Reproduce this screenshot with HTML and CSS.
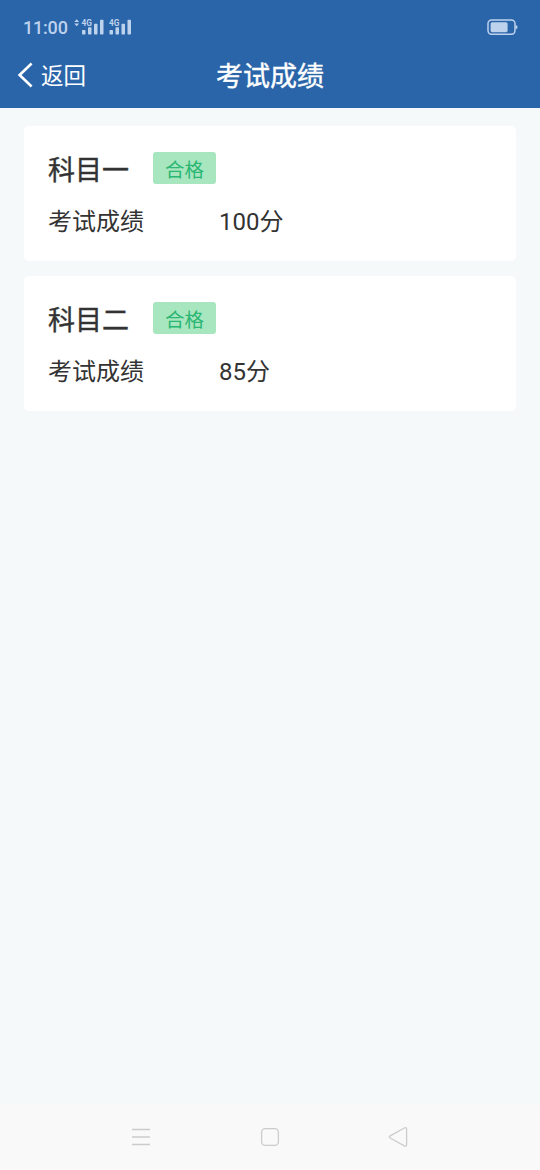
FILE: index.html
```
<!DOCTYPE html>
<html lang="zh-CN">
<head>
<meta charset="utf-8">
<title>考试成绩</title>
<link rel="stylesheet" href="styles.css">
</head>
<body>
<div class="screen">
  <header class="header">
    <div class="status">
      <span class="clock">11:00</span>
      <svg class="signal" width="60" height="20" viewBox="0 0 60 20">
        <path d="M0.3 7 2.7 4.2 5.1 7zM0.3 8.4 2.7 11.2 5.1 8.4z"/>
        <text x="7.6" y="10.7" textLength="10.4" lengthAdjust="spacingAndGlyphs">4G</text>
        <rect x="8" y="15" width="3.5" height="4.6" rx=".8"/>
        <rect x="14" y="12.2" width="3.5" height="7.4" rx=".8"/>
        <rect x="20" y="8.8" width="3.5" height="10.8" rx=".8"/>
        <rect x="26" y="4.8" width="3.5" height="14.8" rx=".8"/>
        <text x="34.9" y="10.7" textLength="10.4" lengthAdjust="spacingAndGlyphs">4G</text>
        <rect x="35.5" y="15" width="3.5" height="4.6" rx=".8"/>
        <rect x="41.5" y="12.2" width="3.5" height="7.4" rx=".8"/>
        <rect x="47.5" y="8.8" width="3.5" height="10.8" rx=".8"/>
        <rect x="53.5" y="4.8" width="3.5" height="14.8" rx=".8"/>
      </svg>
      <svg class="battery" width="31" height="17" viewBox="0 0 31 17">
        <rect class="battery-case" x="1" y="1" width="27" height="14.2" rx="3.6"/>
        <rect x="3.6" y="3.2" width="17" height="10" rx="1.6"/>
        <path d="M28.6 6q2 .4 2 2.1t-2 2.1z"/>
      </svg>
    </div>
    <nav class="navbar">
      <a class="back">
        <svg class="chevron" width="16" height="26" viewBox="0 0 16 26"><path d="M14.6 1.5 2.6 13 14.6 24.5"/></svg>
        <span>返回</span>
      </a>
      <h1 class="title">考试成绩</h1>
    </nav>
  </header>
  <main class="list">
    <section class="card">
      <div class="card-head"><h2 class="subject">科目一</h2><span class="tag">合格</span></div>
      <div class="row"><span class="label">考试成绩</span><span class="score">100分</span></div>
    </section>
    <section class="card">
      <div class="card-head"><h2 class="subject">科目二</h2><span class="tag">合格</span></div>
      <div class="row"><span class="label">考试成绩</span><span class="score">85分</span></div>
    </section>
  </main>
  <footer class="sysnav">
    <svg width="20" height="22" viewBox="0 0 20 22"><path d="M1 3.5h18M1 11h18M1 18.5h18"/></svg>
    <svg width="20" height="22" viewBox="0 0 20 22"><rect x="1.6" y="2.6" width="16.8" height="16.8" rx="3.6"/></svg>
    <svg width="20" height="22" viewBox="0 0 20 22"><path d="M2.2 9.9 16.3 2q2.3-1 2.3 1.2v15.4q0 2.3-2.3 1.3L2.2 12q-1.7-1 0-2.1z"/></svg>
  </footer>
</div>
</body>
</html>
```

FILE: styles.css
```
* { box-sizing: border-box; }
body {
  margin: 0;
  font-family: Roboto, "Noto Sans CJK SC", sans-serif;
  color: #333;
}
.screen {
  display: flex;
  flex-direction: column;
  height: 1170px;
  background: #f5f9fa;
}
.header {
  height: 108px;
  background: #2b65a9;
  color: #fff;
}
.status {
  display: flex;
  align-items: flex-start;
  height: 46px;
  padding: 15px 22px 0 23px;
  color: #bdd2ed;
}
.clock {
  width: 51px;
  padding-top: 1px;
  font-size: 18px;
  font-weight: 500;
  line-height: 24px;
  letter-spacing: -.2px;
}
.signal { fill: #bdd2ed; }
.signal text { font: 700 8.5px Roboto, sans-serif; }
.battery {
  margin: 4px 0 0 auto;
  fill: #bdd2ed;
}
.battery-case {
  fill: none;
  stroke: #bdd2ed;
  stroke-width: 1.5;
}
.navbar {
  display: grid;
  grid-template-columns: 1fr auto 1fr;
  align-items: center;
  height: 58px;
  padding: 0 17px;
}
.back {
  display: flex;
  align-items: center;
  gap: 8px;
  font-size: 22.5px;
  line-height: 32px;
}
.back span { padding-top: 1px; }
.chevron {
  fill: none;
  stroke: #fff;
  stroke-width: 2.6;
}
.title {
  margin: 0;
  padding-top: 3px;
  font-size: 27px;
  font-weight: 400;
  line-height: 40px;
  -webkit-text-stroke: .4px currentColor;
}
.list {
  display: flex;
  flex: 1;
  flex-direction: column;
  gap: 15px;
  padding: 18px 24px;
}
.card {
  height: 135px;
  padding: 24px 24px 0;
  border-radius: 5px;
  background: #fff;
}
.card-head {
  display: flex;
  align-items: center;
  gap: 24px;
  height: 36px;
}
.subject {
  margin: 0;
  padding-top: 5px;
  font-size: 27px;
  font-weight: 400;
  line-height: 36px;
  -webkit-text-stroke: .4px currentColor;
}
.tag {
  width: 63px;
  height: 32px;
  padding-top: 3px;
  border-radius: 3px;
  background: #a8e6c0;
  color: #2bb673;
  font-size: 19.5px;
  line-height: 32px;
  text-align: center;
}
.row {
  display: flex;
  margin-top: 18px;
  font-size: 24px;
  line-height: 36px;
}
.label { width: 171px; }
.sysnav {
  display: flex;
  justify-content: space-between;
  height: 65px;
  padding: 21px 132px 0 131px;
  background: #f9f9f9;
}
.sysnav svg {
  fill: none;
  stroke: #ccc;
  stroke-width: 1.3;
}
```
